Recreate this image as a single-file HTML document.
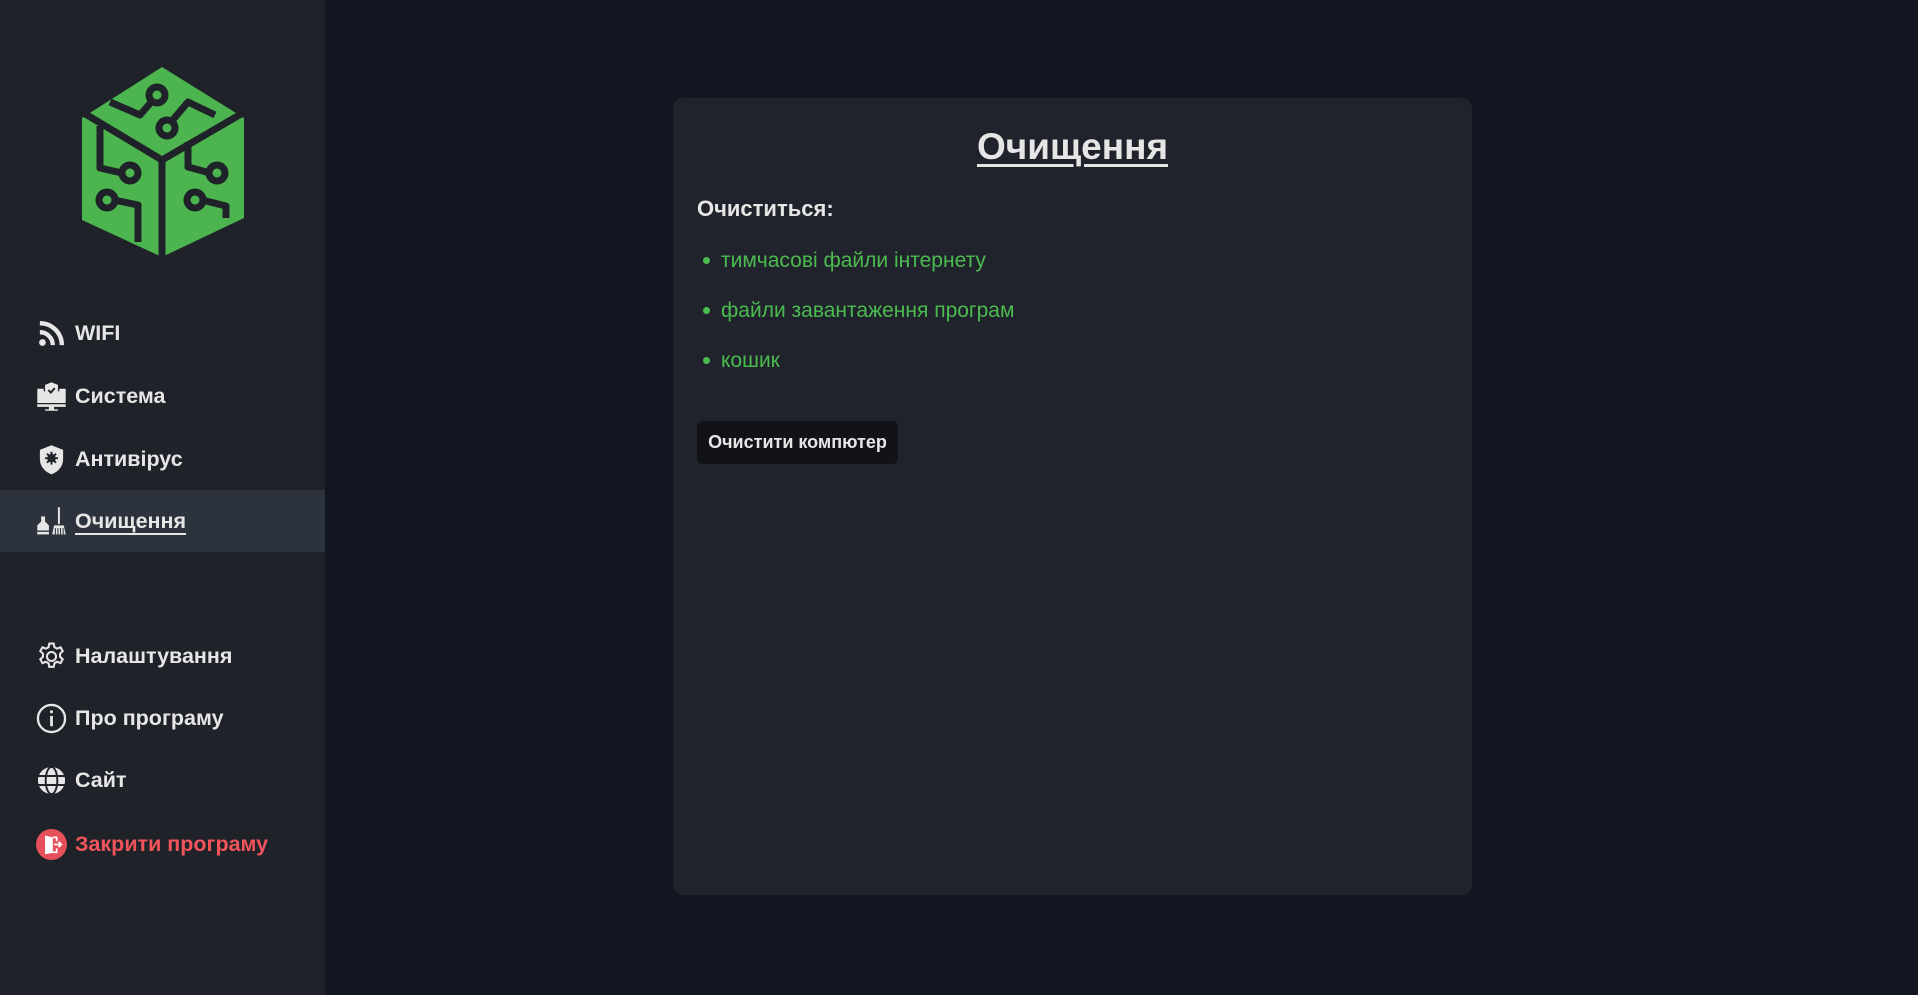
<!DOCTYPE html>
<html><head><meta charset="utf-8"><style>
*{margin:0;padding:0;box-sizing:border-box}
body{width:1918px;height:995px;background:#111620;font-family:"Liberation Sans",Roboto,sans-serif;position:relative;overflow:hidden;color:#e4e4e4}
.side{position:absolute;left:0;top:0;width:325px;height:995px;background:#1f2229}
.item{position:absolute;left:0;width:325px;height:62px;display:flex;align-items:center;padding-left:36px;font-weight:bold;font-size:21.5px;color:#e6e6e6}
.item svg{width:31px;height:31px;margin-right:8px}
.item.active{background:#2d333d}
.item.active span{text-decoration:underline;text-underline-offset:5px;text-decoration-thickness:2px}
.card{position:absolute;left:673px;top:98px;width:799px;height:797px;background:#20232b;border-radius:10px}
h1{position:absolute;left:0;width:100%;text-align:center;font-size:37px;font-weight:bold;text-decoration:underline;text-underline-offset:5px;text-decoration-thickness:3px;color:#e6e6e6}
.dot{display:inline-block;width:7px;height:7px;border-radius:50%;background:#4cbb4f;margin:0 11px 3px 6px}
</style></head><body>
<div class="side">
<svg style="position:absolute;left:70px;top:60px" width="190" height="205" viewBox="0 0 190 205">
<polygon points="92,7 174,58 174,158 92,197 12,160 12,58" fill="#4cb54f"/>
<g stroke="#1f2229" stroke-width="7" fill="none" stroke-linejoin="round">
<path d="M92,100 V200 M92,100 L12,52 M92,100 L178,50"/>
<path d="M83,40 L70,55 L40,42"/>
<path d="M101,62 L118,42 L145,55"/>
<path d="M30,66 V108 L52,113"/>
<path d="M44,140 L68,145 V182"/>
<path d="M140,113 L118,107 V82"/>
<path d="M132,140 L156,146 V158"/>
<circle cx="87" cy="35" r="8"/><circle cx="97" cy="68" r="8"/>
<circle cx="60" cy="113" r="8"/><circle cx="37" cy="140" r="8"/>
<circle cx="147" cy="113" r="8"/><circle cx="125" cy="140" r="8"/>
</g></svg>

<div class="item" style="top:302px"><svg viewBox="0 0 24 24"><circle cx="5" cy="19" r="2.6" fill="#e6e6e6"/><path d="M3 11a10 10 0 0 1 10 10M3 4a17 17 0 0 1 17 17" stroke="#e6e6e6" stroke-width="3.4" fill="none"/></svg><span>WIFI</span></div>
<div class="item" style="top:365px"><svg viewBox="0 0 24 24"><path d="M1 6h5v2h12V6h5v11H1zM1 18h22v2H1zM10 20h4v2h3v1H7v-1h3z" fill="#e6e6e6"/><path d="M12 1l5 2v4c0 3-2 5-5 6c-3-1-5-3-5-6V3z" fill="#e6e6e6"/><path d="M9.5 7l2 2 3-3.5" stroke="#1f2229" stroke-width="1.5" fill="none"/></svg><span>Система</span></div>
<div class="item" style="top:428px"><svg viewBox="0 0 24 24"><path d="M12 1l9 3.5v7c0 6-4 10-9 12c-5-2-9-6-9-12v-7z" fill="#e6e6e6"/><g stroke="#1f2229" stroke-width="1.5"><circle cx="12" cy="11" r="2.5" fill="#1f2229"/><path d="M12 6v10M7 11h10M8.5 7.5l7 7M15.5 7.5l-7 7"/></g></svg><span>Антивірус</span></div>
<div class="item active" style="top:490px"><svg viewBox="0 0 24 24"><path d="M4 8h3v4l3 3v4H1v-4l3-3z" fill="#e6e6e6"/><rect x="1" y="20" width="9" height="2" fill="#e6e6e6"/><path d="M17 1h1.5v13H17z" fill="#e6e6e6"/><path d="M14 15h7.5l1.5 7H12.5z" fill="#e6e6e6"/><path d="M15 17v5M17 17v5M19 17v5M21 17v5" stroke="#2d333d" stroke-width="0.8"/></svg><span>Очищення</span></div>

<div class="item" style="top:625px"><svg viewBox="0 0 24 24" fill="none" stroke="#e6e6e6" stroke-width="1.6"><circle cx="12" cy="12" r="3.5"/><path d="M10.3 2h3.4l.6 2.8 2 1.1 2.7-1 1.7 3-2.1 1.9v2.4l2.1 1.9-1.7 3-2.7-1-2 1.1-.6 2.8h-3.4l-.6-2.8-2-1.1-2.7 1-1.700-3 2.1-1.9v-2.4L3.3 7.9l1.7-3 2.7 1 2-1.1z"/></svg><span>Налаштування</span></div>
<div class="item" style="top:687px"><svg viewBox="0 0 24 24" fill="none" stroke="#e6e6e6" stroke-width="1.8"><circle cx="12" cy="12" r="10.5"/><path d="M12 10v8" stroke-width="2.2"/><circle cx="12" cy="6.8" r="1.2" fill="#e6e6e6" stroke="none"/></svg><span>Про програму</span></div>
<div class="item" style="top:749px"><svg viewBox="0 0 24 24"><circle cx="12" cy="12" r="10.5" fill="#e6e6e6"/><g stroke="#1f2229" stroke-width="1.5" fill="none"><ellipse cx="12" cy="12" rx="4.5" ry="10.5"/><path d="M1.5 8.5h21M1.5 15.5h21"/></g></svg><span>Сайт</span></div>
<div class="item" style="top:813px;color:#f2545b"><svg viewBox="0 0 24 24"><circle cx="12" cy="12" r="12" fill="#e5505a"/><path d="M7 5l6 1.5v12L7 19.5z" fill="#fff"/><path d="M13 6.5h3v3M16 15v3h-3" stroke="#fff" stroke-width="1.3" fill="none"/><path d="M14 12h5.5M17.5 10l2 2-2 2" stroke="#fff" stroke-width="1.4" fill="none"/></svg><span>Закрити програму</span></div>
</div>

<div class="card">
<h1 style="top:28px">Очищення</h1>
<div style="position:absolute;left:24px;top:98px;font-size:22px;font-weight:bold;color:#e6e6e6">Очиститься:</div>
<div style="position:absolute;left:24px;top:138px;font-size:21px;color:#4cbb4f;line-height:50px">
<div><span class="dot"></span>тимчасові файли інтернету</div>
<div><span class="dot"></span>файли завантаження програм</div>
<div><span class="dot"></span>кошик</div>
</div>
<div style="position:absolute;left:24px;top:323px;width:201px;height:43px;background:#111318;border-radius:6px;font-size:18px;font-weight:bold;color:#e6e6e6;display:flex;align-items:center;justify-content:center">Очистити компютер</div>
</div>
</body></html>
